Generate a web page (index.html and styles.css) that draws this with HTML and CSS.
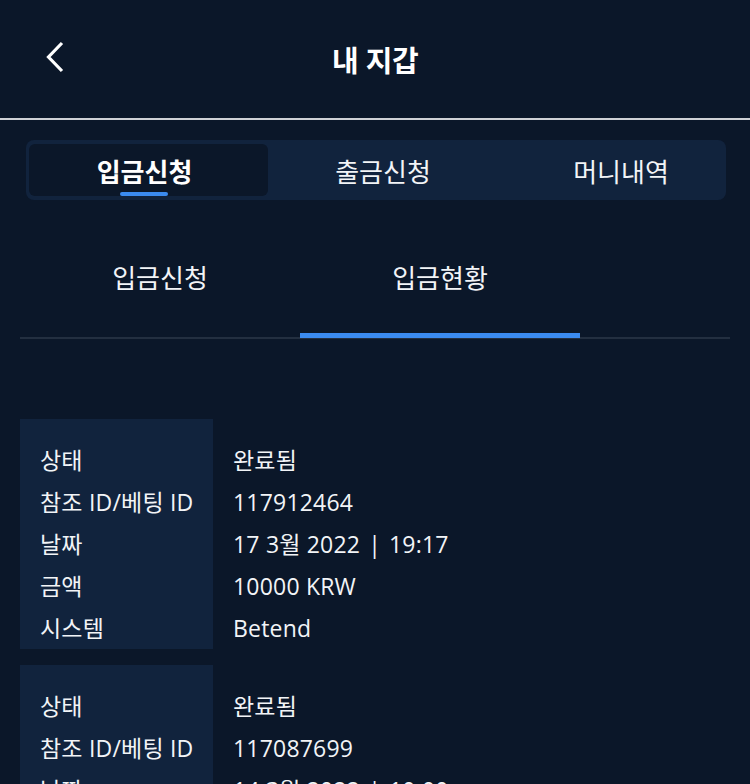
FILE: index.html
```html
<!DOCTYPE html>
<html lang="ko">

<head>
  <meta charset="UTF-8" />
  <meta name="viewport" content="width=device-width, initial-scale=1.0" />
  <title>내 지갑</title>
  <link rel="stylesheet" href="styles.css">
</head>

<body>
  <div class="wallet">
    <header class="header">
      <button type="button" class="back">
        <svg width="24" height="34" viewBox="0 0 24 34">
          <path d="M20 3 L6.5 17 L20 31" fill="none" stroke="#fff" stroke-width="3.2" />
        </svg>
      </button>
      <h1 class="title">내 지갑</h1>
    </header>

    <div class="tabs">
      <button class="tab active">입금신청</button>
      <button class="tab">출금신청</button>
      <button class="tab">머니내역</button>
    </div>

    <div class="subtabs">
      <button class="subtab">입금신청</button>
      <button class="subtab active">입금현황</button>
    </div>

    <ul class="records">
      <li class="record">
        <dl class="rows">
          <dt>상태</dt><dd>완료됨</dd>
          <dt>참조 ID/베팅 ID</dt><dd>117912464</dd>
          <dt>날짜</dt><dd>17 3월 2022<span class="sep">|</span>19:17</dd>
          <dt>금액</dt><dd>10000 KRW</dd>
          <dt>시스템</dt><dd>Betend</dd>
        </dl>
      </li>
      <li class="record">
        <dl class="rows">
          <dt>상태</dt><dd>완료됨</dd>
          <dt>참조 ID/베팅 ID</dt><dd>117087699</dd>
          <dt>날짜</dt><dd>14 3월 2022<span class="sep">|</span>10:00</dd>
          <dt>금액</dt><dd>10000 KRW</dd>
          <dt>시스템</dt><dd>Betend</dd>
        </dl>
      </li>
    </ul>
  </div>
</body>

</html>
```

FILE: styles.css
```css
body {
  margin: 0;
  background: #0b1729;
  color: #f2f4f7;
  font-family: "Open Sans", "Noto Sans CJK KR", sans-serif;
}

button {
  font-family: inherit;
  color: inherit;
  background: none;
  border: none;
  padding: 0;
  cursor: pointer;
}

.wallet {
  height: 784px;
  overflow: hidden;
}

.header {
  display: flex;
  align-items: center;
  justify-content: center;
  height: 118px;
  border-bottom: 2px solid #cfd2d6;
  position: relative;
}

.back {
  position: absolute;
  left: 42px;
  top: 40px;
  display: flex;
}

.title {
  margin: 0;
  font-size: 29px;
  font-weight: 700;
  letter-spacing: -0.5px;
  color: #fff;
  font-family: "Noto Sans CJK KR", sans-serif;
}

.tabs {
  display: grid;
  grid-template-columns: 239px 238px 238px;
  margin: 20px 24px 0 26px;
  padding: 4px 3px;
  height: 52px;
  background: #11233d;
  border-radius: 8px;
}

.tab {
  font-size: 26px;
  font-family: "Noto Sans CJK KR", sans-serif;
  border-radius: 6px;
  position: relative;
  padding-right: 8px;
}

.tab.active {
  background: #0b1729;
  font-weight: 700;
  color: #fff;
}

.tab.active::after {
  content: "";
  position: absolute;
  left: 91px;
  bottom: 0;
  width: 48px;
  height: 4px;
  border-radius: 2px;
  background: #3b8bf0;
}

.subtabs {
  display: flex;
  margin: 36px 20px 0;
  border-bottom: 2px solid #232f40;
}

.subtab {
  width: 280px;
  height: 102px;
  padding-bottom: 16px;
  font-size: 26px;
  font-family: "Noto Sans CJK KR", sans-serif;
  border-bottom: 5px solid transparent;
  margin-bottom: -1px;
}

.subtab.active {
  border-bottom-color: #3b8bf0;
}

.records {
  list-style: none;
  margin: 80px 20px 0;
  padding: 0;
  display: flex;
  flex-direction: column;
  gap: 16px;
}

.record {
  background: linear-gradient(to right, #11233d 193px, transparent 193px);
  padding-top: 20px;
}

.rows {
  display: grid;
  grid-template-columns: 193px 1fr;
  margin: 0;
  font-size: 23px;
  letter-spacing: 0.2px;
  line-height: 42px;
}

.rows dt {
  padding-left: 20px;
  white-space: nowrap;
}

.rows dd {
  margin: 0;
  padding-left: 20px;
}

.sep {
  margin: 0 8px;
}
```
